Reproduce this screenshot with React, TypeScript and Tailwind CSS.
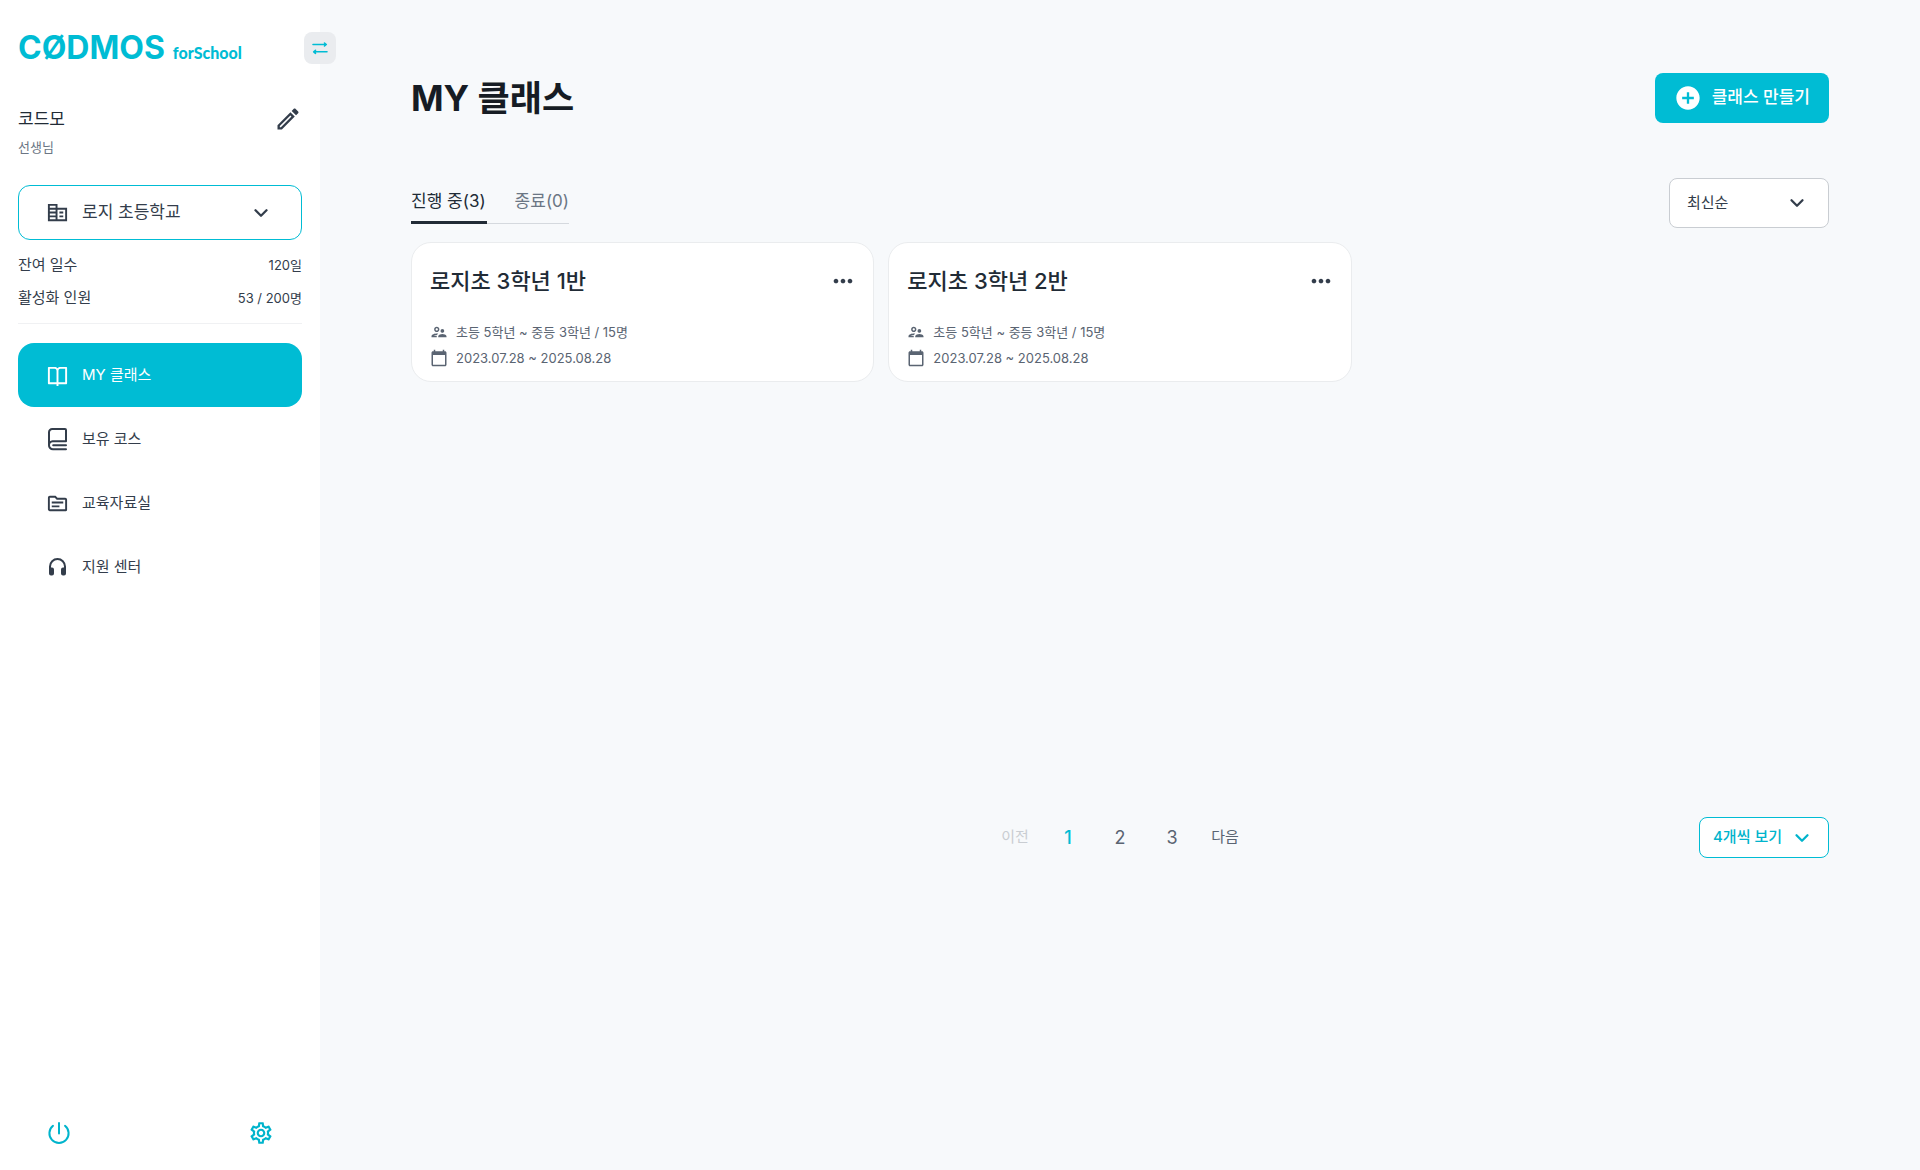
import React, { useState } from 'react';
import clsx from 'clsx';
import { ChevronDown } from 'lucide-react';
import {
  MdAddCircle,
  MdCalendarToday,
  MdMoreHoriz,
  MdOutlineCorporateFare,
  MdOutlineEdit,
  MdOutlineSettings,
  MdOutlineSupervisorAccount,
  MdOutlineTopic,
} from 'react-icons/md';
import { RiBookOpenLine } from 'react-icons/ri';

const classes = [
  { id: 1, name: '로지초 3학년 1반', target: '초등 5학년 ~ 중등 3학년 / 15명', period: '2023.07.28 ~ 2025.08.28' },
  { id: 2, name: '로지초 3학년 2반', target: '초등 5학년 ~ 중등 3학년 / 15명', period: '2023.07.28 ~ 2025.08.28' },
];

const menus = [
  { label: 'MY 클래스', icon: <RiBookOpenLine size={23} /> },
  { label: '보유 코스', icon: <CourseIcon /> },
  { label: '교육자료실', icon: <MdOutlineTopic size={23} /> },
  { label: '지원 센터', icon: <HeadphoneIcon /> },
];

function CourseIcon() {
  return (
    <svg width="23" height="24" viewBox="0 0 23 24" fill="none" stroke="currentColor" strokeWidth="2" strokeLinecap="round" strokeLinejoin="round">
      <path d="M3 18.5V5.2A3.2 3.2 0 0 1 6.2 2H19a1 1 0 0 1 1 1v11.2H6.6A3.7 3.7 0 0 0 3 18a4 4 0 0 0 4 4.3h13" />
      <path d="M7.2 18.2H20" />
    </svg>
  );
}

function HeadphoneIcon() {
  return (
    <svg width="23" height="23" viewBox="0 0 23 23" fill="none" stroke="currentColor" strokeWidth="2">
      <path d="M4 16v-5.5a7.5 7.5 0 0 1 15 0V16" />
      <path d="M3 11.5h3a2 2 0 0 1 2 2v4a2 2 0 0 1-2 2H5a2 2 0 0 1-2-2zM20 11.5h-3a2 2 0 0 0-2 2v4a2 2 0 0 0 2 2h1a2 2 0 0 0 2-2z" fill="currentColor" stroke="none" />
    </svg>
  );
}

function PowerIcon() {
  return (
    <svg width="26" height="26" viewBox="0 0 26 26" fill="none" stroke="currentColor" strokeWidth="2" strokeLinecap="round">
      <path d="M13 3v10.5" />
      <path d="M7 5.8a9.6 9.6 0 1 0 12 0" />
    </svg>
  );
}

function SwapIcon() {
  return (
    <svg width="16" height="14" viewBox="0 0 16 14" fill="none" stroke="currentColor" strokeWidth="1.6" strokeLinecap="round" strokeLinejoin="round">
      <path d="M1 3.5h13M12.5 2l1.8 1.5L12.5 5" />
      <path d="M15 10.8H2M3.5 9.3L1.7 10.8l1.8 1.5" />
    </svg>
  );
}

function Logo() {
  return (
    <a href="#" className="flex h-8 items-baseline gap-2 text-[#00bcd4]">
      <span className="text-[32px] leading-8 font-bold">CØDMOS</span>
      <span className="font-['Lato'] text-[16px] font-black">forSchool</span>
    </a>
  );
}

function Sidebar() {
  const [active, setActive] = useState('MY 클래스');

  return (
    <aside className="relative flex w-80 shrink-0 flex-col bg-white px-[18px] pt-8 pb-6">
      <Logo />
      <button
        type="button"
        aria-label="메뉴 접기"
        className="absolute top-8 -right-4 flex size-8 items-center justify-center rounded-lg bg-[#eaecef] text-[#00bcd4]"
      >
        <SwapIcon />
      </button>

      <div className="mt-[41px] flex items-center justify-between">
        <p className="text-[17px] leading-7 text-[#212b36]">코드모</p>
        <button type="button" aria-label="프로필 수정" className="text-[#333d4b]">
          <MdOutlineEdit size={28} />
        </button>
      </div>
      <p className="mt-0.5 text-[13px] leading-6 text-[#6b7684]">선생님</p>

      <div className="relative mt-[26px] flex items-center text-[#333d4b]">
        <MdOutlineCorporateFare size={23} className="pointer-events-none absolute left-7" />
        <select
          aria-label="학교 선택"
          className="h-[55px] w-full appearance-none rounded-xl border border-[#00bcd4] bg-white pl-[63px] text-[17px]"
        >
          <option>로지 초등학교</option>
        </select>
        <ChevronDown size={22} strokeWidth={2.5} className="pointer-events-none absolute right-[30px]" />
      </div>

      <dl className="mt-[9px] border-b border-[#f0f1f3] pb-2 text-[#333d4b]">
        <div className="flex h-[33px] items-center justify-between">
          <dt className="text-[15px]">잔여 일수</dt>
          <dd className="text-[13px]">120일</dd>
        </div>
        <div className="flex h-[33px] items-center justify-between">
          <dt className="text-[15px]">활성화 인원</dt>
          <dd className="text-[13px]">53 / 200명</dd>
        </div>
      </dl>

      <nav className="mt-[19px]">
        {menus.map((menu) => (
          <a
            key={menu.label}
            href="#"
            onClick={() => setActive(menu.label)}
            className={clsx(
              'flex h-16 items-center gap-[13px] rounded-2xl pl-7 text-[15px]',
              active === menu.label ? 'bg-[#00bcd4] text-white' : 'text-[#333d4b]'
            )}
          >
            {menu.icon}
            {menu.label}
          </a>
        ))}
      </nav>

      <div className="mt-auto flex justify-between pr-7 pl-7 text-[#00b4cc]">
        <button type="button" aria-label="로그아웃">
          <PowerIcon />
        </button>
        <button type="button" aria-label="설정">
          <MdOutlineSettings size={26} />
        </button>
      </div>
    </aside>
  );
}

function ClassCard({ name, target, period }: { name: string; target: string; period: string }) {
  return (
    <article className="rounded-[20px] border border-[#eaecee] bg-white px-[18px] pt-5 pb-2.5">
      <div className="flex items-center justify-between">
        <h2 className="text-[22px] leading-9 font-medium text-[#212b36]">{name}</h2>
        <button type="button" aria-label="더보기" className="-mr-0.5 text-[#333d4b]">
          <MdMoreHoriz size={28} />
        </button>
      </div>
      <div className="mt-5 text-[13px] leading-[26px] text-[#5a6472]">
        <p className="flex items-center gap-2">
          <span className="flex w-[18px] justify-center">
            <MdOutlineSupervisorAccount size={18} />
          </span>
          {target}
        </p>
        <p className="flex items-center gap-2">
          <span className="flex w-[18px] justify-center">
            <MdCalendarToday size={18} />
          </span>
          {period}
        </p>
      </div>
    </article>
  );
}

export default function App() {
  const [page, setPage] = useState(1);

  return (
    <div className="flex min-h-screen bg-[#f7f9fb] font-['Inter','Noto_Sans_CJK_KR',sans-serif]">
      <Sidebar />
      <main className="flex-1 px-[91px] pt-[73px]">
        <header className="flex items-center justify-between">
          <h1 className="text-[35px] leading-[50px] font-bold text-[#161c24]">MY 클래스</h1>
          <button type="button" className="flex h-[50px] items-center gap-2.5 rounded-lg bg-[#00bcd4] px-[19px] text-[17px] font-medium text-white">
            <MdAddCircle size={28} />
            클래스 만들기
          </button>
        </header>

        <div className="mt-[55px] flex items-start justify-between">
          <div role="tablist" className="flex h-[46px] text-[17px]">
            <button type="button" role="tab" aria-selected="true" className="border-b-[3px] border-[#212b36] pt-1 pr-px text-[#212b36]">
              진행 중(3)
            </button>
            <button type="button" role="tab" aria-selected="false" className="border-b border-[#d5d9de] pt-0.5 pl-7 text-[#6b7684]">
              종료(0)
            </button>
          </div>
          <div className="relative flex items-center text-[#333d4b]">
            <select aria-label="정렬" className="h-[50px] w-40 appearance-none rounded-lg border border-[#c9cdd2] bg-white pl-[17px] text-[15px]">
              <option>최신순</option>
            </select>
            <ChevronDown size={22} strokeWidth={2.5} className="pointer-events-none absolute right-[21px]" />
          </div>
        </div>

        <section className="mt-3.5 grid min-h-[575px] grid-cols-3 content-start gap-3.5">
          {classes.map((item) => (
            <ClassCard key={item.id} name={item.name} target={item.target} period={item.period} />
          ))}
        </section>

        <footer className="grid grid-cols-[1fr_auto_1fr] items-center">
          <nav className="col-start-2 flex items-center text-[15px] text-[#5a6472]">
            <button type="button" disabled className="w-[54px] text-[#c9cdd2]">
              이전
            </button>
            {[1, 2, 3].map((n) => (
              <button
                key={n}
                type="button"
                onClick={() => setPage(n)}
                className={clsx('w-[52px] text-[18px]', page === n && 'font-medium text-[#00bcd4]')}
              >
                {n}
              </button>
            ))}
            <button type="button" className="w-[54px]">
              다음
            </button>
          </nav>
          <div className="relative flex items-center justify-self-end text-[#00b4cc]">
            <select aria-label="페이지당 개수" className="h-[41px] w-[130px] appearance-none rounded-lg border border-[#00bcd4] bg-white pl-[13px] text-[15px] font-medium">
              <option>4개씩 보기</option>
            </select>
            <ChevronDown size={22} strokeWidth={2.5} className="pointer-events-none absolute right-4" />
          </div>
        </footer>
      </main>
    </div>
  );
}
